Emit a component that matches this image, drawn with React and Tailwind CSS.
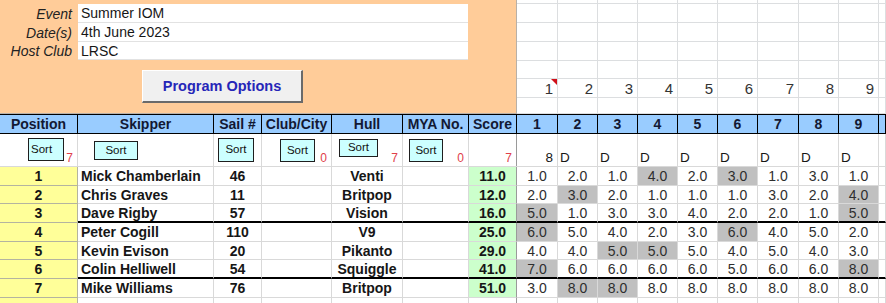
import React from "react";

const COLS =
  "grid grid-cols-[78px_136px_48px_70px_71px_66px_48px_41px_40px_40px_40px_40px_40px_41px_40px_40px_1fr]";
const RACE_COLS =
  "grid grid-cols-[41px_40px_40px_40px_40px_40px_41px_40px_40px_1fr]";

const info = [
  { label: "Event", value: "Summer IOM", h: "h-[19px]" },
  { label: "Date(s)", value: "4th June 2023", h: "h-[19px]" },
  { label: "Host Club", value: "LRSC", h: "h-[18px]" },
];

const topRows = ["h-[4px]", "h-[19px]", "h-[19px]", "h-[19px]", "h-[18px]", "h-[19px]", "h-[16px]"];

const headers = ["Position", "Skipper", "Sail #", "Club/City", "Hull", "MYA No.", "Score", "1", "2", "3", "4", "5", "6", "7", "8", "9", ""];

// sort buttons floating over the cells of the second row
const sortCells = [
  { btn: "left-[28px] top-[4px] w-[36px] h-[23px] justify-start pl-[2px]", count: "7" },
  { btn: "left-[16px] top-[7px] w-[44px] h-[19px] justify-center" },
  { btn: "left-[4px] top-[4px] w-[36px] h-[24px] justify-center" },
  { btn: "left-[18px] top-[5px] w-[35px] h-[23px] justify-center", count: "0" },
  { btn: "left-[7px] top-[5px] w-[39px] h-[18px] justify-center", count: "7" },
  { btn: "left-[6px] top-[5px] w-[34px] h-[23px] justify-center", count: "0" },
  { count: "7" },
];

const results = [
  { pos: 1, name: "Mick Chamberlain", sail: "46", hull: "Venti", score: "11.0", races: [1, 2, 1, 4, 2, 3, 1, 3, 1], drop: [3, 5], h: "h-[19px]" },
  { pos: 2, name: "Chris Graves", sail: "11", hull: "Britpop", score: "12.0", races: [2, 3, 2, 1, 1, 1, 3, 2, 4], drop: [1, 8], h: "h-[18px]" },
  { pos: 3, name: "Dave Rigby", sail: "57", hull: "Vision", score: "16.0", races: [5, 1, 3, 3, 4, 2, 2, 1, 5], drop: [0, 8], h: "h-[19px]", thick: true },
  { pos: 4, name: "Peter Cogill", sail: "110", hull: "V9", score: "25.0", races: [6, 5, 4, 2, 3, 6, 4, 5, 2], drop: [0, 5], h: "h-[19px]" },
  { pos: 5, name: "Kevin Evison", sail: "20", hull: "Pikanto", score: "29.0", races: [4, 4, 5, 5, 5, 4, 5, 4, 3], drop: [2, 3], h: "h-[18px]" },
  { pos: 6, name: "Colin Helliwell", sail: "54", hull: "Squiggle", score: "41.0", races: [7, 6, 6, 6, 6, 5, 6, 6, 8], drop: [0, 8], h: "h-[19px]", thick: true },
  { pos: 7, name: "Mike Williams", sail: "76", hull: "Britpop", score: "51.0", races: [3, 8, 8, 8, 8, 8, 8, 8, 8], drop: [1, 2], h: "h-[19px]" },
];

const ResultRow = ({ r }) => {
  const line = r.thick ? "border-b-2 border-b-black" : "border-b border-b-[#d9d9d9]";
  const cell = `flex items-center border-r border-r-[#d9d9d9] ${line}`;
  return (
    <div className={`${COLS} ${r.h}`}>
      <div className="flex items-center justify-center bg-[#ffff99] border-r border-b border-[#b4b4a0] font-bold">
        {r.pos}
      </div>
      <div className={`${cell} pl-[3px] font-bold`}>{r.name}</div>
      <div className={`${cell} justify-center font-bold`}>{r.sail}</div>
      <div className={cell}></div>
      <div className={`${cell} justify-center font-bold`}>{r.hull}</div>
      <div className={cell}></div>
      <div className={`flex items-center justify-center bg-[#ccffcc] border-r border-r-[#9a9a9a] font-bold ${line}`}>
        {r.score}
      </div>
      {r.races.map((v, i) => (
        <div
          key={i}
          className={`${cell} justify-center text-[14px] text-[#2e2e2e] ${r.drop.includes(i) ? "bg-[#c0c0c0]" : ""}`}
        >
          {v.toFixed(1)}
        </div>
      ))}
      <div className={cell}></div>
    </div>
  );
};

export default function App() {
  return (
    <div className="w-[886px] h-[303px] overflow-hidden bg-white font-['Liberation_Sans',Arial,sans-serif] text-[14px] leading-none text-[#161616]">
      {/* EVENT HEADER */}
      <div className="flex h-[114px]">
        <div className="w-[517px] shrink-0 bg-[#ffcc99] border-b border-r border-[#b8b0a8] pt-[4px]">
          {info.map((row) => (
            <div key={row.label} className={`flex ${row.h}`}>
              <div className="w-[78px] pr-[6px] flex items-center justify-end italic text-[#222]">
                {row.label}
              </div>
              <div className="w-[390px] flex items-center pl-[3px] bg-white border-b border-[#e2e2e2]">
                {row.value}
              </div>
            </div>
          ))}
          <button className="ml-[142px] mt-[10px] w-[161px] h-[33px] flex items-center justify-center bg-[#f0f0f0] border-t border-l border-[#ffffff] border-r-2 border-b-2 border-r-[#6a6a6a] border-b-[#6a6a6a] font-bold text-[14.5px] text-[#2626b8]">
            Program Options
          </button>
        </div>
        <div className="flex-1 flex flex-col">
          {topRows.map((h, ri) => (
            <div key={ri} className={`${RACE_COLS} ${h}`}>
              {Array.from({ length: 10 }).map((_, ci) => (
                <div
                  key={ci}
                  className="relative flex items-center justify-end pr-[4px] border-r border-b border-[#dcdee0] text-[15px] text-[#333]"
                >
                  {ri === 5 && ci < 9 ? ci + 1 : ""}
                  {ri === 5 && ci === 0 && (
                    <span className="absolute top-0 right-0 w-[6px] h-[6px] bg-[#d0101a] [clip-path:polygon(0_0,100%_0,100%_100%)]" />
                  )}
                </div>
              ))}
            </div>
          ))}
        </div>
      </div>

      {/* COLUMN HEADERS */}
      <div className={`${COLS} h-[20px] bg-[#99ccff] border-y border-black`}>
        {headers.map((h, i) => (
          <div
            key={i}
            className="flex items-center justify-center border-r border-black font-bold text-[14px] text-[#121833] whitespace-nowrap overflow-hidden"
          >
            {h}
          </div>
        ))}
      </div>

      {/* SORT ROW */}
      <div className={`${COLS} h-[33px] border-b border-[#d9d9d9]`}>
        {sortCells.map((c, i) => (
          <div
            key={i}
            className={`relative flex items-end justify-end pr-[4px] pb-[2px] ${i === 6 ? "border-r border-r-[#9a9a9a]" : "border-r border-r-[#d9d9d9]"}`}
          >
            {c.btn && (
              <span
                className={`absolute ${c.btn} flex items-center bg-[#ccffff] border border-[#1e1e1e] text-[11.5px] text-[#111]`}
              >
                Sort
              </span>
            )}
            {c.count && (
              <span className="text-[12px] leading-[12px] text-[#e0404a]">{c.count}</span>
            )}
          </div>
        ))}
        <div className="flex items-end justify-end pr-[4px] pb-[2px] border-r border-r-[#d9d9d9] text-[13.5px] leading-[13px]">
          8
        </div>
        {Array.from({ length: 8 }).map((_, i) => (
          <div
            key={i}
            className="flex items-end pl-[2px] pb-[2px] border-r border-r-[#d9d9d9] text-[13.5px] leading-[13px]"
          >
            D
          </div>
        ))}
        <div className="border-r border-r-[#d9d9d9]"></div>
      </div>

      {/* RESULTS */}
      {results.map((r) => (
        <ResultRow key={r.pos} r={r} />
      ))}
      <div className={`${COLS} h-[8px]`}>
        <div className="bg-[#ffff99] border-r border-[#b4b4a0]"></div>
        {Array.from({ length: 16 }).map((_, i) => (
          <div key={i} className={`border-r ${i === 5 ? "border-r-[#9a9a9a]" : "border-r-[#d9d9d9]"}`}></div>
        ))}
      </div>
    </div>
  );
}
